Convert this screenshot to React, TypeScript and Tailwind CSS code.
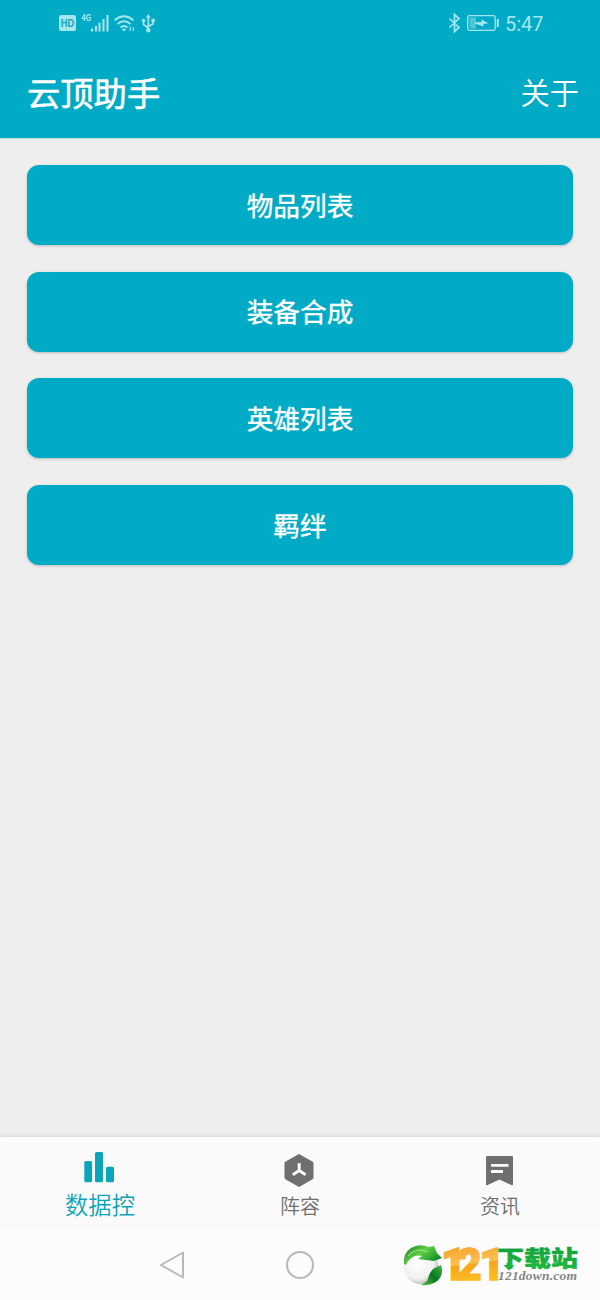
import type { ReactNode } from 'react'

export default function App() {
  const menuItems = ['物品列表', '装备合成', '英雄列表', '羁绊'];

  return (
    <div className="w-[600px] h-[1300px] flex flex-col bg-[#eeeeee] overflow-hidden relative font-['Noto_Sans_CJK_SC','Noto_Sans',sans-serif]">
      <header className="h-[138px] shrink-0 bg-[#02abc5] flex flex-col shadow-[0_1px_1px_rgba(0,80,95,0.15)]">
        <StatusBar />
        <div className="flex-1 flex items-center justify-between pl-[27px] pr-[21px] pb-[2px] text-white">
          <h1 className="text-[33.3px] leading-none font-normal [-webkit-text-stroke:0.5px_white]">云顶助手</h1>
          <button className="text-[29.3px] leading-none font-[350]">关于</button>
        </div>
      </header>

      <main className="flex-1 flex flex-col gap-[26.67px] px-[27px] pt-[27px]">
        {menuItems.map((item) => (
          <button key={item} className="h-20 rounded-[12px] bg-[#02abc5] text-white text-[26.67px] leading-none font-normal [-webkit-text-stroke:0.4px_white] flex items-center justify-center shadow-[0_1px_3px_rgba(0,0,0,0.22)]">
            {item}
          </button>
        ))}
      </main>

      <nav className="h-[93px] shrink-0 bg-[#fafafa] grid grid-cols-3 shadow-[0_-2px_4px_rgba(0,0,0,0.08)]">
        <TabItem label="数据控" active icon={<BarsIcon />} />
        <TabItem label="阵容" icon={<HexIcon />} />
        <TabItem label="资讯" icon={<NewsIcon />} />
      </nav>

      <div className="h-[70px] shrink-0 bg-[#fcfcfc] flex items-center">
        <div className="w-[343px] flex justify-center">
          <svg width="28" height="30" viewBox="0 0 28 30" fill="none" stroke="#b9b9b9" strokeWidth="2" strokeLinejoin="round">
            <path d="M25 2.5 V27.5 L3 15 Z" />
          </svg>
        </div>
        <div className="-ml-[57px] w-7 h-7 rounded-full border-2 border-[#b9b9b9]" />
      </div>

      <div className="absolute left-[399px] top-[1234px]">
        <SiteLogo />
      </div>
    </div>
  );
}

function StatusBar() {
  return (
    <div className="h-[48px] shrink-0 flex items-center justify-between pl-[58px] pr-[56px] text-[#a5e6ee]">
      <svg width="100" height="26" viewBox="0 0 100 26" fill="none" stroke="currentColor">
        {/* HD voice */}
        <rect x="1" y="4" width="17" height="16" rx="2" fill="currentColor" stroke="none" />
        <text x="9.5" y="16" textAnchor="middle" fontFamily="Liberation Sans" fontWeight="700" fontSize="11" textLength="13.5" lengthAdjust="spacingAndGlyphs" fill="#18a5ba" stroke="none">HD</text>
        {/* signal */}
        <text x="23.3" y="9.5" fontFamily="Roboto" fontWeight="700" fontSize="9.5" textLength="10" lengthAdjust="spacingAndGlyphs" fill="currentColor" stroke="none">4G</text>
        <path d="M34 17.5V20.5M38 15V20.5M41.5 11.5V20.5M45.5 8V20.5M49.5 4V20.5" strokeWidth="2.1" />
        {/* wifi */}
        <g strokeWidth="2">
          <path d="M56.5 9.2Q66 1.2 75.5 9.2" />
          <path d="M59.5 13Q66 7.5 72.5 13" />
          <path d="M62.5 16.5Q66 13.5 69.5 16.5" />
        </g>
        <path d="M64 18.3Q66 16.8 68 18.3L66 20.5Z" fill="currentColor" stroke="none" />
        <path d="M72.3 15.5V20M75.3 16.5V20" strokeWidth="1.5" opacity="0.8" />
        {/* usb */}
        <g strokeWidth="1.7">
          <path d="M90.3 5V20M90.3 17L85.5 13.5V9.5M90.3 15.5L95 13V9.5" />
        </g>
        <g fill="currentColor" stroke="none">
          <path d="M90.3 3L92.8 6.8H87.8Z" />
          <circle cx="85.5" cy="9.5" r="1.8" />
          <rect x="93.4" y="7.8" width="3.4" height="3.4" />
          <circle cx="90.3" cy="19.3" r="2.2" />
        </g>
      </svg>

      <div className="flex items-center">
        <svg width="59" height="26" viewBox="0 0 59 26" fill="none" stroke="currentColor">
          <path d="M3.5 7.5L13 16.5L8.5 20.5V3.5L13 7.5L3.5 16.5" strokeWidth="1.7" />
          <rect x="21.7" y="4.7" width="27.5" height="14.6" rx="1.8" strokeWidth="1.3" />
          <rect x="23.5" y="6.5" width="6.5" height="11" fill="currentColor" opacity="0.45" stroke="none" />
          <path d="M29 11.2L35.5 11V8.5L42.5 12.2L37.5 13V15.5L29 12.5Z" fill="currentColor" stroke="none" />
          <path d="M51.8 8V16" strokeWidth="2" />
        </svg>
        <span className="font-['Roboto',sans-serif] text-[20px] leading-none w-[39px]">5:47</span>
      </div>
    </div>
  );
}

function TabItem({ label, icon, active }: { label: string; icon: ReactNode; active?: boolean }) {
  return (
    <div className={active ? 'flex flex-col items-center pt-[13px] text-[#0ba5b9]' : 'flex flex-col items-center pt-[15px] text-[#6f6f6f]'}>
      {icon}
      <span className={active ? 'mt-[9px] text-[23.3px] leading-none font-[350]' : 'mt-[8px] text-[20px] leading-none font-[350]'}>{label}</span>
    </div>
  );
}

function BarsIcon() {
  return (
    <svg width="34" height="34" viewBox="0 0 34 34" fill="currentColor">
      <rect x="1.3" y="11" width="7.8" height="21.3" rx="1.5" />
      <rect x="12" y="2" width="8" height="30.3" rx="1.5" />
      <rect x="23" y="16.8" width="8" height="15.5" rx="1.5" />
    </svg>
  );
}

function HexIcon() {
  return (
    <svg width="34" height="36" viewBox="0 0 34 36">
      <path d="M16 2.5L30 10.4V26.5L16 34.5L2 26.5V10.4Z" fill="currentColor" stroke="currentColor" strokeWidth="1" strokeLinejoin="round" />
      <path d="M16.2 11.3V20.2M16.2 18.5L9.8 22.7M16.2 18.5L22.6 22.7" stroke="#fafafa" strokeWidth="3" fill="none" />
    </svg>
  );
}

function NewsIcon() {
  return (
    <svg width="34" height="36" viewBox="0 0 34 36">
      <path d="M3 5.2Q3 4 4.2 4H28.8Q30 4 30 5.2V32Q30 34 28.3 33L16.5 27.5L4.7 33Q3 34 3 32Z" fill="currentColor" />
      <path d="M8 13.3H25.5M8 19.5H20" stroke="#fafafa" strokeWidth="2.8" />
    </svg>
  );
}

function SiteLogo() {
  return (
    <svg width="185" height="62" viewBox="0 -5 185 62">
      <defs>
        <radialGradient id="ball" cx="0.4" cy="0.4" r="0.65">
          <stop offset="0" stopColor="#ffffff" />
          <stop offset="0.7" stopColor="#f0f0f0" />
          <stop offset="1" stopColor="#b4b8b4" />
        </radialGradient>
        <linearGradient id="leaf" x1="0" y1="0" x2="1" y2="0.6">
          <stop offset="0" stopColor="#157a22" />
          <stop offset="0.5" stopColor="#5fd048" />
          <stop offset="1" stopColor="#0b8a26" />
        </linearGradient>
        <linearGradient id="leafDark" x1="0" y1="1" x2="1" y2="0">
          <stop offset="0" stopColor="#55c848" />
          <stop offset="0.5" stopColor="#0a7420" />
          <stop offset="1" stopColor="#3cb83e" />
        </linearGradient>
        <linearGradient id="gold" gradientUnits="userSpaceOnUse" x1="60" y1="9" x2="64" y2="41">
          <stop offset="0" stopColor="#f7a632" />
          <stop offset="0.5" stopColor="#fbc050" />
          <stop offset="0.56" stopColor="#f5a41a" />
          <stop offset="1" stopColor="#fbbb22" />
        </linearGradient>
        <linearGradient id="green" x1="0" y1="0" x2="0" y2="1">
          <stop offset="0" stopColor="#0c9a3c" />
          <stop offset="1" stopColor="#22bd3e" />
        </linearGradient>
      </defs>
      <circle cx="22" cy="27.5" r="17.5" fill="url(#ball)" />
      <path d="M5 25Q4 14 12 9Q20 4 30 8L35 7L38 14L43 19L35 22L19 20L23 17Q16 15 11 20Q8 23 7 26Z" fill="url(#leaf)" />
      <path d="M42 26Q46 38 35 44Q28 47 22 46L28 42L31 34L34 30L42 26Z" fill="url(#leafDark)" />
      <path d="M9 17Q17 8 29 13" stroke="#b9f08e" strokeWidth="1.2" fill="none" opacity="0.6" />

      <text x="42 57.5 80.5" y="40.5" fontFamily="Roboto" fontWeight="900" fontSize="43.5" fill="url(#gold)" stroke="url(#gold)" strokeWidth="1.6">121</text>
      <text x="98" y="26.8" fontFamily="Noto Sans CJK SC" fontWeight="900" fontSize="21.5" textLength="81" lengthAdjust="spacingAndGlyphs" fill="url(#green)" stroke="#18ab3e" strokeWidth="0.4">下载站</text>
      <path d="M107.5 24H112.5V26H115.5L110 31.5L104.5 26H107.5Z" fill="#22b53e" />
      <text x="99" y="41" fontFamily="Liberation Serif" fontStyle="italic" fontWeight="700" fontSize="13.5" textLength="79" lengthAdjust="spacing" fill="#858585">121down.com</text>
    </svg>
  );
}
